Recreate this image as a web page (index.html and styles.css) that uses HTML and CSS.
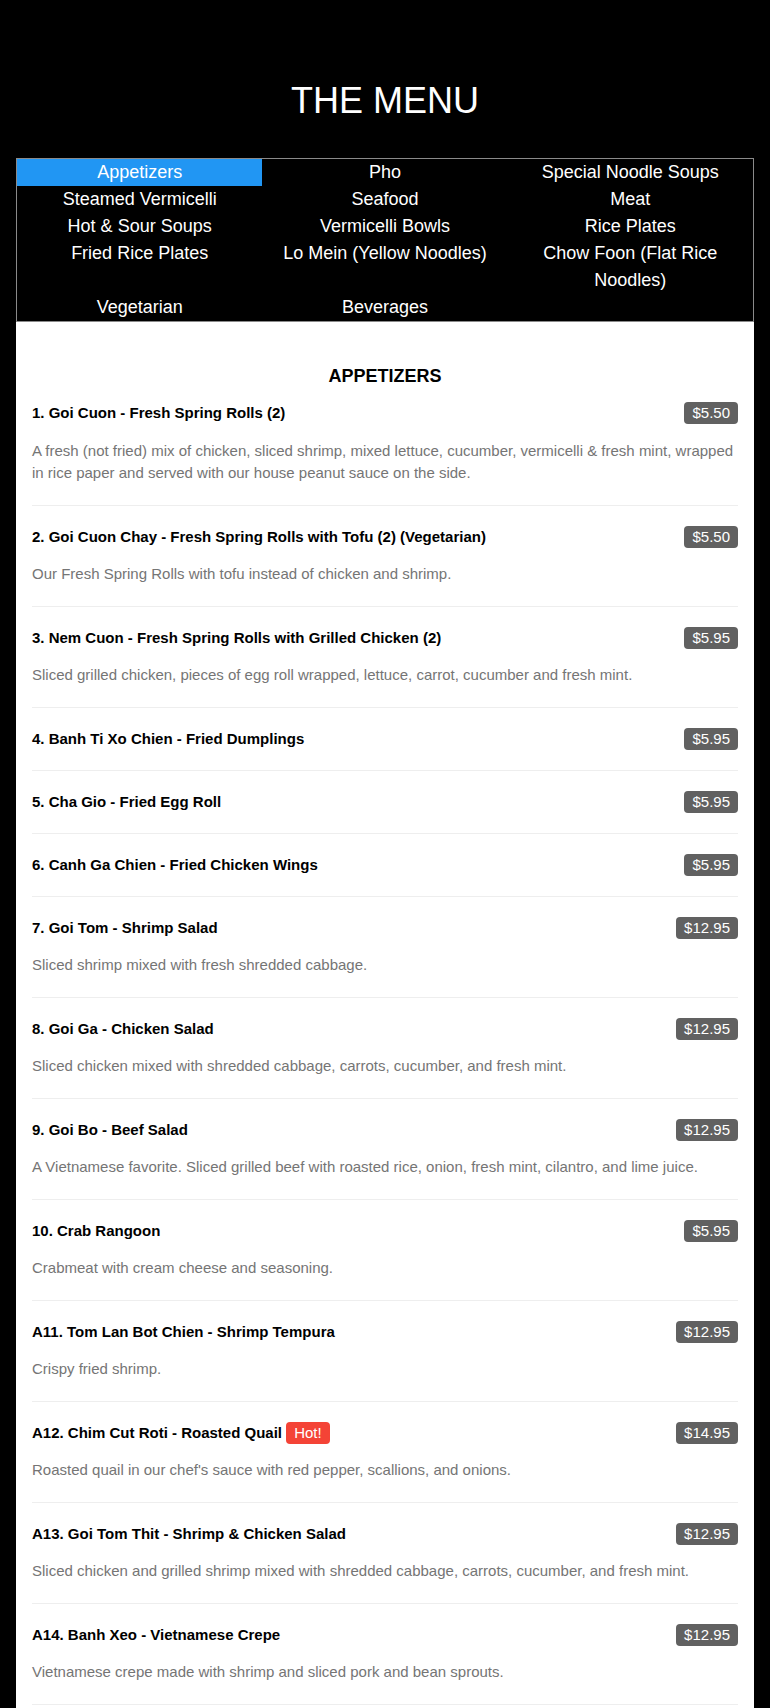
FILE: index.html
```html
<!DOCTYPE html>
<html lang="en">
<head>
<meta charset="utf-8">
<title>The Menu</title>
<link rel="stylesheet" href="styles.css">
</head>
<body>
<header class="header">
  <h1 class="title">THE MENU</h1>
</header>
<nav class="tabs">
  <a class="tab active">Appetizers</a>
  <a class="tab">Pho</a>
  <a class="tab">Special Noodle Soups</a>
  <a class="tab">Steamed Vermicelli</a>
  <a class="tab">Seafood</a>
  <a class="tab">Meat</a>
  <a class="tab">Hot &amp; Sour Soups</a>
  <a class="tab">Vermicelli Bowls</a>
  <a class="tab">Rice Plates</a>
  <a class="tab">Fried Rice Plates</a>
  <a class="tab">Lo Mein (Yellow Noodles)</a>
  <a class="tab">Chow Foon (Flat Rice Noodles)</a>
  <a class="tab">Vegetarian</a>
  <a class="tab">Beverages</a>
</nav>
<main class="panel">
  <h5 class="section-title">APPETIZERS</h5>
  <ul class="items">
    <li class="item">
      <div class="item-row"><span class="item-name">1. Goi Cuon - Fresh Spring Rolls (2)</span><span class="tag price">$5.50</span></div>
      <p class="item-desc">A fresh (not fried) mix of chicken, sliced shrimp, mixed lettuce, cucumber, vermicelli &amp; fresh mint, wrapped in rice paper and served with our house peanut sauce on the side.</p>
    </li>
    <li class="item">
      <div class="item-row"><span class="item-name">2. Goi Cuon Chay - Fresh Spring Rolls with Tofu (2) (Vegetarian)</span><span class="tag price">$5.50</span></div>
      <p class="item-desc">Our Fresh Spring Rolls with tofu instead of chicken and shrimp.</p>
    </li>
    <li class="item">
      <div class="item-row"><span class="item-name">3. Nem Cuon - Fresh Spring Rolls with Grilled Chicken (2)</span><span class="tag price">$5.95</span></div>
      <p class="item-desc">Sliced grilled chicken, pieces of egg roll wrapped, lettuce, carrot, cucumber and fresh mint.</p>
    </li>
    <li class="item">
      <div class="item-row"><span class="item-name">4. Banh Ti Xo Chien - Fried Dumplings</span><span class="tag price">$5.95</span></div>
    </li>
    <li class="item">
      <div class="item-row"><span class="item-name">5. Cha Gio - Fried Egg Roll</span><span class="tag price">$5.95</span></div>
    </li>
    <li class="item">
      <div class="item-row"><span class="item-name">6. Canh Ga Chien - Fried Chicken Wings</span><span class="tag price">$5.95</span></div>
    </li>
    <li class="item">
      <div class="item-row"><span class="item-name">7. Goi Tom - Shrimp Salad</span><span class="tag price">$12.95</span></div>
      <p class="item-desc">Sliced shrimp mixed with fresh shredded cabbage.</p>
    </li>
    <li class="item">
      <div class="item-row"><span class="item-name">8. Goi Ga - Chicken Salad</span><span class="tag price">$12.95</span></div>
      <p class="item-desc">Sliced chicken mixed with shredded cabbage, carrots, cucumber, and fresh mint.</p>
    </li>
    <li class="item">
      <div class="item-row"><span class="item-name">9. Goi Bo - Beef Salad</span><span class="tag price">$12.95</span></div>
      <p class="item-desc">A Vietnamese favorite. Sliced grilled beef with roasted rice, onion, fresh mint, cilantro, and lime juice.</p>
    </li>
    <li class="item">
      <div class="item-row"><span class="item-name">10. Crab Rangoon</span><span class="tag price">$5.95</span></div>
      <p class="item-desc">Crabmeat with cream cheese and seasoning.</p>
    </li>
    <li class="item">
      <div class="item-row"><span class="item-name">A11. Tom Lan Bot Chien - Shrimp Tempura</span><span class="tag price">$12.95</span></div>
      <p class="item-desc">Crispy fried shrimp.</p>
    </li>
    <li class="item">
      <div class="item-row"><span class="item-name">A12. Chim Cut Roti - Roasted Quail <span class="tag hot">Hot!</span></span><span class="tag price">$14.95</span></div>
      <p class="item-desc">Roasted quail in our chef's sauce with red pepper, scallions, and onions.</p>
    </li>
    <li class="item">
      <div class="item-row"><span class="item-name">A13. Goi Tom Thit - Shrimp &amp; Chicken Salad</span><span class="tag price">$12.95</span></div>
      <p class="item-desc">Sliced chicken and grilled shrimp mixed with shredded cabbage, carrots, cucumber, and fresh mint.</p>
    </li>
    <li class="item">
      <div class="item-row"><span class="item-name">A14. Banh Xeo - Vietnamese Crepe</span><span class="tag price">$12.95</span></div>
      <p class="item-desc">Vietnamese crepe made with shrimp and sliced pork and bean sprouts.</p>
    </li>
  </ul>
</main>
</body>
</html>
```

FILE: styles.css
```css
html, body {
  margin: 0;
  padding: 0;
}

body {
  background: #000;
  font-family: "Liberation Sans", Arial, sans-serif;
  font-size: 15px;
  line-height: 1.5;
  color: #000;
}

.header {
  padding: 74px 16px 30px;
  text-align: center;
}

.title {
  margin: 0;
  font-size: 36px;
  font-weight: 400;
  line-height: 54px;
  color: #fff;
}

.tabs {
  margin: 0 16px;
  border: 1px solid #8a8a8a;
  display: grid;
  grid-template-columns: repeat(3, 1fr);
}

.tab {
  display: block;
  text-align: center;
  color: #fff;
  font-size: 18px;
  line-height: 27px;
  cursor: pointer;
}

.tab.active {
  background: #2196f3;
}

.panel {
  margin: 0 16px;
  background: #fff;
  padding: 41px 16px 0;
  min-height: 1400px;
}

.section-title {
  margin: 0 0 12px;
  text-align: center;
  font-size: 18px;
  font-weight: 700;
  line-height: 27px;
}

.items {
  list-style: none;
  margin: 0;
  padding: 0;
}

.item {
  padding: 20px 0;
  border-bottom: 1px solid #eee;
}

.item:first-child {
  padding-top: 0;
}

.item-row {
  display: flex;
  justify-content: space-between;
  align-items: center;
  gap: 12px;
  height: 22px;
}

.item-name {
  font-weight: 700;
  font-size: 15px;
  line-height: 22px;
  white-space: nowrap;
}

.tag {
  display: inline-block;
  padding: 0 8px;
  height: 22px;
  line-height: 22px;
  border-radius: 4px;
  color: #fff;
  font-size: 15px;
  font-weight: 400;
}

.price {
  background: #616161;
  flex-shrink: 0;
}

.hot {
  background: #f44336;
}

.item-desc {
  margin: 15.5px 0 0;
  color: #757575;
  font-size: 15px;
  line-height: 22.5px;
}
```
